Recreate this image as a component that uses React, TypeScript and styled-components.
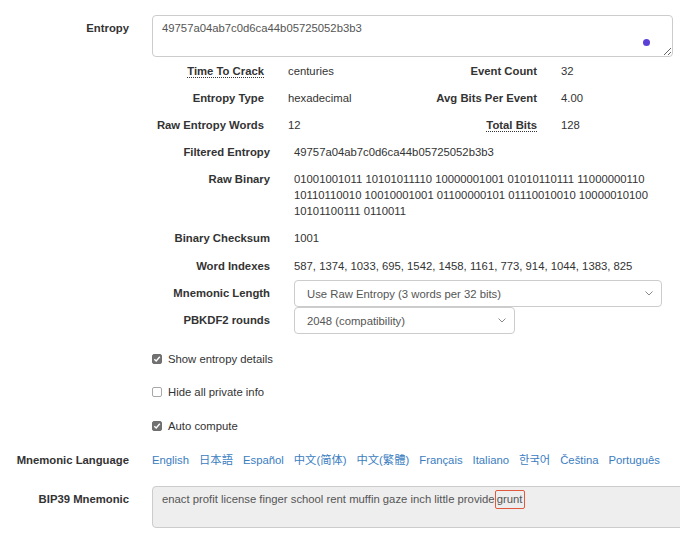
import React from 'react';
import styled, { createGlobalStyle } from 'styled-components';

const GlobalStyle = createGlobalStyle`
  html, body {
    margin: 0;
    padding: 0;
    background: #fff;
    overflow: hidden;
  }
  body {
    font-family: "Liberation Sans", Arial, "Noto Sans CJK SC", sans-serif;
    font-size: 11.3px;
    line-height: 16px;
    color: #333;
  }
`;

const Page = styled.div`
  width: 720px;
  padding-top: 15px;
`;

const FormRow = styled.div<{ $gap?: number }>`
  display: grid;
  grid-template-columns: 129px 1fr;
  column-gap: 23px;
  margin-bottom: ${(p) => p.$gap ?? 0}px;
`;

const Label = styled.div<{ $top?: number }>`
  text-align: right;
  font-weight: bold;
  padding-top: ${(p) => p.$top ?? 0}px;
  white-space: nowrap;
`;

const Content = styled.div``;

const EntropyBox = styled.div`
  position: relative;
  width: 521px;
`;

const TextArea = styled.textarea`
  display: block;
  box-sizing: border-box;
  width: 521px;
  height: 42px;
  padding: 4px 9px;
  border: 1px solid #ccc;
  border-radius: 4px;
  font: inherit;
  color: #555;
  line-height: 16px;
  resize: vertical;
  outline: none;
`;

const Dot = styled.span`
  position: absolute;
  right: 23px;
  top: 24px;
  width: 7px;
  height: 7px;
  border-radius: 50%;
  background: #5b3fd6;
`;

const StatsGrid = styled.div`
  display: grid;
  grid-template-columns: 112px 150px 123px 1fr;
  width: 440px;
  margin-top: 1px;
`;

const DetailGrid = styled.div`
  display: grid;
  grid-template-columns: 118px 1fr;
`;

const Key = styled.div<{ $top?: number }>`
  text-align: right;
  font-weight: bold;
  padding: ${(p) => p.$top ?? 5}px 0 6px;
  white-space: nowrap;
`;

const Val = styled.div<{ $pad: number; $top?: number }>`
  padding: ${(p) => p.$top ?? 5}px 0 6px ${(p) => p.$pad}px;
  white-space: nowrap;
`;

const Binary = styled(Val)`
  white-space: normal;
  width: 372px;
`;

const Abbr = styled.abbr`
  text-decoration: none;
  border-bottom: 1px dotted #333;
  cursor: help;
`;

const SelectCell = styled.div`
  padding-left: 24px;
  display: flex;
  align-items: center;
`;

const SelectBox = styled.div<{ $w: number }>`
  position: relative;
  width: ${(p) => p.$w}px;
  height: 27px;
  box-sizing: border-box;
  border: 1px solid #ccc;
  border-radius: 4px;
  background: #fff;
  color: #555;
  display: flex;
  align-items: center;
  padding-left: 12px;
`;

const Chevron = styled.svg`
  position: absolute;
  right: 8px;
  top: 10px;
`;

const Checks = styled.div`
  padding-top: 8px;
`;

const CheckRow = styled.label`
  display: flex;
  align-items: center;
  height: 33.5px;
  gap: 6px;
  color: #333;
`;

const Box = styled.span<{ $on: boolean }>`
  box-sizing: border-box;
  width: 10px;
  height: 10px;
  border-radius: 2px;
  border: 1px solid ${(p) => (p.$on ? '#6f6f6f' : '#a8a8a8')};
  background: ${(p) => (p.$on ? '#727272' : '#fff')};
  display: flex;
  align-items: center;
  justify-content: center;
`;

const LangRow = styled.div`
  display: flex;
  gap: 10px;
  height: 32px;
  align-items: center;
  padding-top: 2px;
  box-sizing: border-box;
`;

const LangLink = styled.a`
  color: #3a7dbf;
  text-decoration: none;
  white-space: nowrap;
`;

const LangLabel = styled(Label)`
  line-height: 30px;
`;

const MnemonicBox = styled.div`
  box-sizing: border-box;
  width: 560px;
  height: 42px;
  border: 1px solid #ccc;
  border-radius: 4px;
  background: #eee;
  color: #555;
  padding: 4px 9px;
`;

const Highlight = styled.span`
  border: 1.5px solid #e0593f;
  border-radius: 2px;
  padding: 2px 1px 3px 1px;
  margin-left: -3px;
`;

function Check({ on, children }: { on: boolean; children: React.ReactNode }) {
  return (
    <CheckRow>
      <Box $on={on}>
        {on && (
          <svg width="8" height="8" viewBox="0 0 8 8">
            <path d="M1.3 4.2 L3.2 6 L6.8 1.8" fill="none" stroke="#fff" strokeWidth="1.4" />
          </svg>
        )}
      </Box>
      {children}
    </CheckRow>
  );
}

function Select({ width, children }: { width: number; children: React.ReactNode }) {
  return (
    <SelectBox $w={width}>
      {children}
      <Chevron width="8" height="5" viewBox="0 0 8 5">
        <path d="M0.5 0.5 L4 4 L7.5 0.5" fill="none" stroke="#888" strokeWidth="1" />
      </Chevron>
    </SelectBox>
  );
}

const languages = ['English', '日本語', 'Español', '中文(简体)', '中文(繁體)', 'Français', 'Italiano', '한국어', 'Čeština', 'Português'];

export default function App() {
  return (
    <Page>
      <GlobalStyle />
      <FormRow>
        <Label $top={5}>Entropy</Label>
        <Content>
          <EntropyBox>
            <TextArea defaultValue="49757a04ab7c0d6ca44b05725052b3b3" />
            <Dot />
          </EntropyBox>
          <StatsGrid>
            <Key><Abbr title="time to crack">Time To Crack</Abbr></Key>
            <Val $pad={24}>centuries</Val>
            <Key>Event Count</Key>
            <Val $pad={24}>32</Val>
            <Key>Entropy Type</Key>
            <Val $pad={24}>hexadecimal</Val>
            <Key>Avg Bits Per Event</Key>
            <Val $pad={24}>4.00</Val>
            <Key>Raw Entropy Words</Key>
            <Val $pad={24}>12</Val>
            <Key><Abbr title="total bits">Total Bits</Abbr></Key>
            <Val $pad={24}>128</Val>
          </StatsGrid>
          <DetailGrid>
            <Key>Filtered Entropy</Key>
            <Val $pad={24}>49757a04ab7c0d6ca44b05725052b3b3</Val>
            <Key>Raw Binary</Key>
            <Binary $pad={24}>
              01001001011 10101011110 10000001001 01010110111 11000000110 10110110010 10010001001 01100000101 01110010010 10000010100 10101100111 0110011
            </Binary>
            <Key>Binary Checksum</Key>
            <Val $pad={24}>1001</Val>
            <Key $top={6}>Word Indexes</Key>
            <Val $pad={24} $top={6}>587, 1374, 1033, 695, 1542, 1458, 1161, 773, 914, 1044, 1383, 825</Val>
            <Key>Mnemonic Length</Key>
            <SelectCell>
              <Select width={368}>Use Raw Entropy (3 words per 32 bits)</Select>
            </SelectCell>
            <Key>PBKDF2 rounds</Key>
            <SelectCell>
              <Select width={221}>2048 (compatibility)</Select>
            </SelectCell>
          </DetailGrid>
          <Checks>
            <Check on>Show entropy details</Check>
            <Check on={false}>Hide all private info</Check>
            <Check on>Auto compute</Check>
          </Checks>
        </Content>
      </FormRow>
      <FormRow $gap={11}>
        <LangLabel $top={2}>Mnemonic Language</LangLabel>
        <LangRow>
          {languages.map((l) => (
            <LangLink key={l} href="#">{l}</LangLink>
          ))}
        </LangRow>
      </FormRow>
      <FormRow>
        <Label $top={5}>BIP39 Mnemonic</Label>
        <MnemonicBox>
          enact profit license finger school rent muffin gaze inch little provide <Highlight>grunt</Highlight>
        </MnemonicBox>
      </FormRow>
    </Page>
  );
}
